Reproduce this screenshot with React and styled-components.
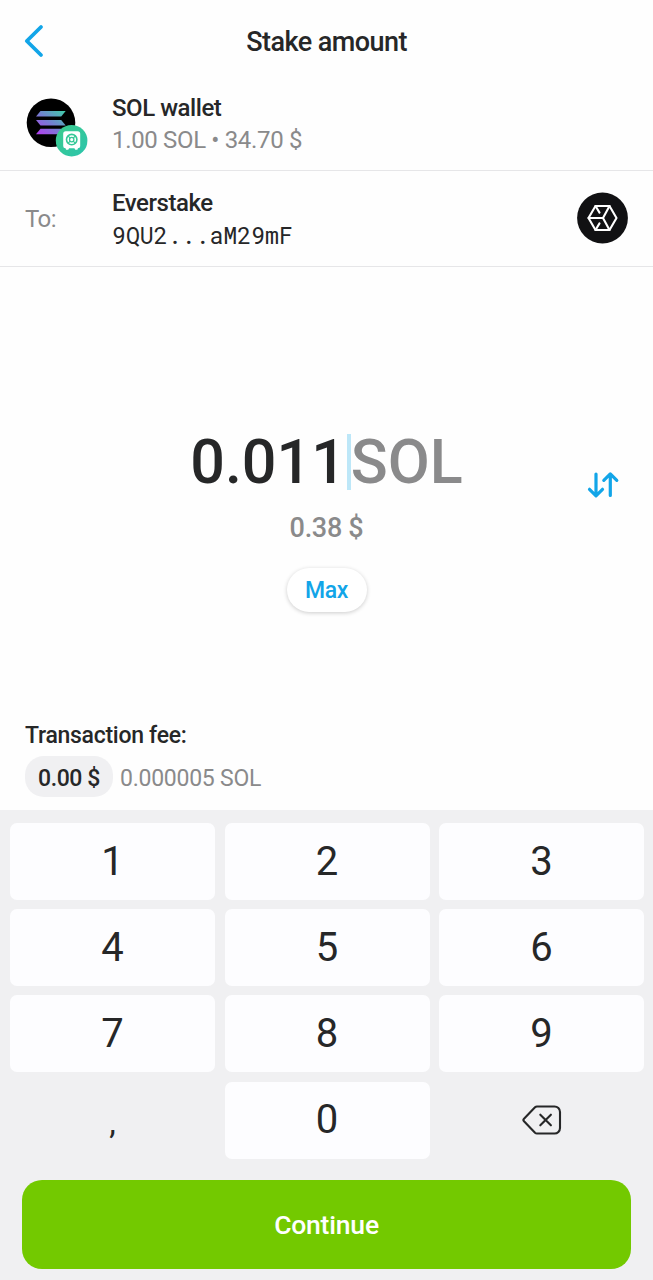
import React, { useState } from 'react';
import styled, { createGlobalStyle } from 'styled-components';

const colors = {
  text: '#262728',
  muted: '#8a8a8b',
  accent: '#12a5e8',
  line: '#e6e6e8',
  panel: '#f0f0f2',
  key: '#fdfdff',
  green: '#73c900',
};

const GlobalStyle = createGlobalStyle`
  * {
    box-sizing: border-box;
  }

  body {
    margin: 0;
    background: #fefefe;
    color: ${colors.text};
    font-family: Roboto, sans-serif;
  }

  button {
    padding: 0;
    border: none;
    background: none;
    color: inherit;
    font-family: inherit;
  }

  svg {
    display: block;
  }
`;

const Screen = styled.div`
  display: flex;
  flex-direction: column;
  width: 653px;
  height: 1280px;
  overflow: hidden;
`;

const Header = styled.header`
  display: grid;
  grid-template-columns: 60px 1fr 60px;
  align-items: center;
  height: 82px;
`;

const BackButton = styled.button`
  padding-left: 23px;
`;

const Title = styled.h1`
  margin: 0;
  padding-top: 2px;
  text-align: center;
  font-size: 27px;
  font-weight: 500;
  line-height: 32px;
  letter-spacing: -0.55px;
`;

const Row = styled.section`
  display: flex;
  align-items: center;
  height: ${props => props.$height}px;
  padding: 0 25px ${props => props.$lift || 0}px;
  border-bottom: 1px solid ${colors.line};
`;

const RowLead = styled.div`
  width: 87px;
  padding-top: ${props => props.$drop || 0}px;
  color: ${colors.muted};
  font-size: 24px;
  font-weight: 450;
  letter-spacing: -0.6px;
`;

const RowBody = styled.div`
  flex: 1;
  padding-top: ${props => props.$drop || 0}px;
`;

const RowTitle = styled.div`
  font-size: 24px;
  font-weight: 500;
  line-height: 32px;
  letter-spacing: -0.45px;
`;

const Balance = styled.div`
  color: ${colors.muted};
  font-size: 24px;
  font-weight: 450;
  line-height: 32px;
  letter-spacing: -0.34px;
`;

const Address = styled.div`
  font-family: 'Roboto Mono', 'DejaVu Sans Mono', monospace;
  font-size: 23.2px;
  line-height: 32px;
`;

const AmountArea = styled.main`
  display: grid;
  grid-template-columns: 100px 1fr 100px;
  height: 439px;
  padding-top: 161px;
`;

const AmountColumn = styled.div`
  grid-column: 2;
  display: flex;
  flex-direction: column;
  align-items: center;
`;

const Amount = styled.div`
  display: flex;
  align-items: center;
  height: 68px;
  font-size: 61px;
  font-weight: 500;
  line-height: 68px;
`;

const Caret = styled.span`
  width: 4px;
  height: 56px;
  margin-left: 1px;
  background: #bde7f8;
`;

const Currency = styled.span`
  color: ${colors.muted};
`;

const FiatAmount = styled.div`
  margin-top: 16px;
  color: ${colors.muted};
  font-size: 27px;
  font-weight: 500;
  line-height: 32px;
  letter-spacing: -0.3px;
`;

const MaxButton = styled.button`
  width: 80px;
  height: 44px;
  margin-top: 24px;
  border-radius: 22px;
  background: #fff;
  box-shadow: 0 1px 4px rgba(0, 0, 0, 0.2);
  color: ${colors.accent};
  font-size: 23px;
  font-weight: 500;
  letter-spacing: -0.3px;
`;

const SwapButton = styled.button`
  align-self: start;
  margin: 42px 0 0 33px;
`;

const Fee = styled.section`
  height: 104px;
  padding: 15px 25px 0;
`;

const FeeLabel = styled.div`
  font-size: 23px;
  font-weight: 500;
  line-height: 30px;
  letter-spacing: -0.28px;
`;

const FeeLine = styled.div`
  display: flex;
  align-items: center;
  height: 41px;
  gap: 7px;
  margin-top: 5px;
`;

const FeePill = styled.div`
  width: 88px;
  height: 41px;
  border-radius: 19px;
  background: ${colors.panel};
  text-align: center;
  font-size: 23px;
  font-weight: 500;
  line-height: 46px;
  letter-spacing: -0.4px;
`;

const FeeAmount = styled.div`
  padding-top: 4px;
  color: ${colors.muted};
  font-size: 23px;
  line-height: 41px;
  letter-spacing: -0.25px;
`;

const Keypad = styled.section`
  flex: 1;
  padding: 13px 9px 0 10px;
  background: ${colors.panel};
`;

const Keys = styled.div`
  display: grid;
  grid-template-columns: repeat(3, 1fr);
  grid-auto-rows: 77px;
  gap: 9.2px 9.5px;
`;

const Key = styled.button`
  display: flex;
  align-items: center;
  justify-content: center;
  border-radius: 7px;
  background: ${props => (props.$plain ? 'none' : colors.key)};
  font-size: 40px;
  font-weight: 400;
  line-height: 46px;
`;

const CommaMark = styled.span`
  padding-top: 5px;
  font-size: 33px;
`;

const ContinueButton = styled.button`
  display: block;
  width: 609px;
  height: 89px;
  margin: 21.5px 0 0 12px;
  border-radius: 20px;
  background: ${colors.green};
  color: #fff;
  font-size: 26.5px;
  font-weight: 500;
  letter-spacing: -0.2px;
`;

const BackIcon = () => (
  <svg width="22" height="34" viewBox="0 0 22 34" fill="none" stroke={colors.accent} strokeWidth="3.8" strokeLinecap="round" strokeLinejoin="round">
    <path d="M18 3 3.8 17 18 31" />
  </svg>
);

const WalletIcon = () => (
  <svg width="64" height="60" viewBox="25 97 64 60">
    <defs>
      <linearGradient id="sol" gradientUnits="userSpaceOnUse" x1="62" y1="108" x2="40" y2="136">
        <stop offset="0" stopColor="#3fd0a8" />
        <stop offset="0.5" stopColor="#7182cf" />
        <stop offset="1" stopColor="#b23ff0" />
      </linearGradient>
      <linearGradient id="vault" x1="0" y1="0" x2="1" y2="1">
        <stop offset="0" stopColor="#3ccb8b" />
        <stop offset="1" stopColor="#2bc4ad" />
      </linearGradient>
    </defs>
    <circle cx="51" cy="122.7" r="24.3" fill="#000" />
    <g fill="url(#sol)">
      <path d="M40.5 111h25.2l-4.5 5.4H36z" />
      <path d="M36 120h25.2l4.5 5.4H40.5z" />
      <path d="M40.5 128.8h25.2l-4.5 5.4H36z" />
    </g>
    <circle cx="71.6" cy="140.7" r="15.8" fill="url(#vault)" />
    <rect x="63.2" y="131.2" width="17" height="17" rx="2.5" fill="#fff" />
    <path d="M65.5 148h3.6l-.8 1.8h-2.2zM74.4 148H78l-.6 1.8h-2.2z" fill="#fff" />
    <circle cx="71.7" cy="139.6" r="5.2" fill="none" stroke="#36c897" strokeWidth="1.6" />
    <circle cx="71.7" cy="139.6" r="2.2" fill="none" stroke="#36c897" strokeWidth="1.3" />
    <path d="m68.2 136.1 2 2m3 3 2 2m0-7-2 2m-3 3-2 2" stroke="#36c897" strokeWidth="1.3" />
  </svg>
);

const ValidatorIcon = () => (
  <svg width="52" height="52" viewBox="0 0 52 52" fill="none" stroke="#fff" strokeWidth="2.1" strokeLinejoin="round" strokeLinecap="round">
    <circle cx="26.5" cy="26" r="25.4" fill="#111113" stroke="none" />
    <path d="M19.5 14h14L40.5 26l-7 12h-14L12.5 26z" />
    <path d="M12.5 26h14.5l6.5-12M27 26l6.5 12" />
    <path d="m19.5 14 4 6.6M19.5 38l4-6.6" />
  </svg>
);

const SwapIcon = () => (
  <svg width="34" height="30" viewBox="0 0 34 30" fill="none" stroke={colors.accent} strokeWidth="3.2" strokeLinecap="round" strokeLinejoin="round">
    <path d="M10 4v21.5M3.5 19.3l6.5 6.5 6.5-6.5" />
    <path d="M24.3 25.5V4.2M17.8 10.4l6.5-6.5 6.5 6.5" />
  </svg>
);

const DeleteIcon = () => (
  <svg width="40" height="30" viewBox="0 0 40 30" fill="none" stroke={colors.text} strokeWidth="2.1" strokeLinecap="round" strokeLinejoin="round">
    <path d="M15 1.5h17.5a5.5 5.5 0 0 1 5.5 5.5v16a5.5 5.5 0 0 1-5.5 5.5H15a3 3 0 0 1-2-.8L2 16.2a1.7 1.7 0 0 1 0-2.4L13 2.3a3 3 0 0 1 2-.8z" />
    <path d="m18.3 9.7 10.6 10.6m0-10.6L18.3 20.3" />
  </svg>
);

const DIGITS = ['1', '2', '3', '4', '5', '6', '7', '8', '9'];

const App = () => {
  const [amount, setAmount] = useState('0.011');

  const handleKey = (key) => setAmount(prev => prev + key);
  const handleDelete = () => setAmount(prev => prev.slice(0, -1));

  return (
    <>
      <GlobalStyle />
      <Screen>
        <Header>
          <BackButton aria-label="Back"><BackIcon /></BackButton>
          <Title>Stake amount</Title>
        </Header>

        <Row $height={89} $lift={4}>
          <RowLead $drop={6}><WalletIcon /></RowLead>
          <RowBody>
            <RowTitle>SOL wallet</RowTitle>
            <Balance>1.00 SOL • 34.70 $</Balance>
          </RowBody>
        </Row>

        <Row $height={96} $lift={1}>
          <RowLead $drop={2}>To:</RowLead>
          <RowBody $drop={2}>
            <RowTitle>Everstake</RowTitle>
            <Address>9QU2...aM29mF</Address>
          </RowBody>
          <ValidatorIcon />
        </Row>

        <AmountArea>
          <AmountColumn>
            <Amount>
              <span>{amount}</span>
              <Caret />
              <Currency>SOL</Currency>
            </Amount>
            <FiatAmount>0.38 $</FiatAmount>
            <MaxButton>Max</MaxButton>
          </AmountColumn>
          <SwapButton aria-label="Swap currency"><SwapIcon /></SwapButton>
        </AmountArea>

        <Fee>
          <FeeLabel>Transaction fee:</FeeLabel>
          <FeeLine>
            <FeePill>0.00 $</FeePill>
            <FeeAmount>0.000005 SOL</FeeAmount>
          </FeeLine>
        </Fee>

        <Keypad>
          <Keys>
            {DIGITS.map(digit => (
              <Key key={digit} onClick={() => handleKey(digit)}>{digit}</Key>
            ))}
            <Key $plain onClick={() => handleKey('.')}><CommaMark>,</CommaMark></Key>
            <Key onClick={() => handleKey('0')}>0</Key>
            <Key $plain aria-label="Delete" onClick={handleDelete}><DeleteIcon /></Key>
          </Keys>
          <ContinueButton>Continue</ContinueButton>
        </Keypad>
      </Screen>
    </>
  );
};

export default App;
